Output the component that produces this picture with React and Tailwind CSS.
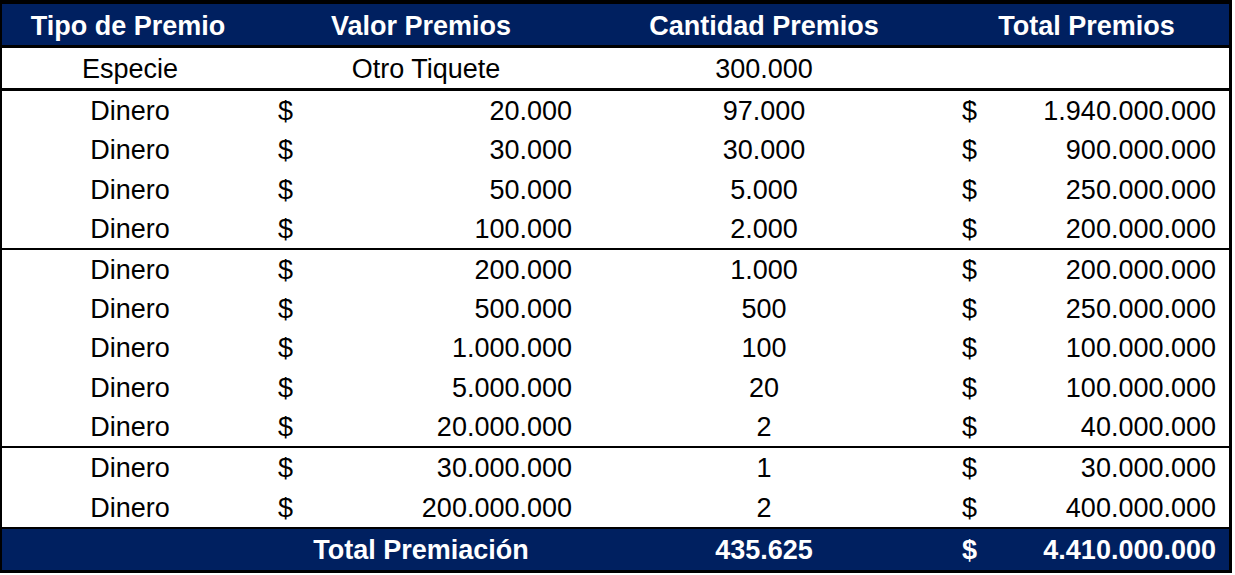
import React from 'react';

const font = { fontFamily: '"Liberation Sans", Arial, sans-serif' };

const groups = [
  [
    ['20.000', '97.000', '1.940.000.000'],
    ['30.000', '30.000', '900.000.000'],
    ['50.000', '5.000', '250.000.000'],
    ['100.000', '2.000', '200.000.000'],
  ],
  [
    ['200.000', '1.000', '200.000.000'],
    ['500.000', '500', '250.000.000'],
    ['1.000.000', '100', '100.000.000'],
    ['5.000.000', '20', '100.000.000'],
    ['20.000.000', '2', '40.000.000'],
  ],
  [
    ['30.000.000', '1', '30.000.000'],
    ['200.000.000', '2', '400.000.000'],
  ],
];

const cols = 'grid grid-cols-[256px_326px_360px_285px]';

function PrizeRow({ valor, cantidad, total, height }) {
  return (
    <div className={`${cols} items-center ${height} pt-[2px] text-[27px] text-black`}>
      <div className="text-center">Dinero</div>
      <div className="flex justify-between pl-[20px] pr-[12px]">
        <span>$</span>
        <span>{valor}</span>
      </div>
      <div className="text-center">{cantidad}</div>
      <div className="flex justify-between pl-[18px] pr-[13px]">
        <span>$</span>
        <span>{total}</span>
      </div>
    </div>
  );
}

export default function App() {
  // Zeilenhöhen je Gruppe (wie im Sheet leicht unterschiedlich)
  const heights = ['h-[39.25px]', 'h-[39.2px]', 'h-[39.5px]'];

  return (
    <div className="bg-white w-[1235px] h-[575px]" style={font}>
      <div className="w-[1232px] border-black border-t-[4px] border-l-[2px] border-r-[3px] border-b-[3px] leading-none">
        {/* Kopfzeile */}
        <div className={`${cols} items-center h-[44px] pt-[3px] bg-[#002060] text-white font-bold text-[27px] border-b-[3px] border-black`}>
          <div className="text-center pr-[4px]">Tipo de Premio</div>
          <div className="text-center">Valor Premios</div>
          <div className="text-center">Cantidad Premios</div>
          <div className="text-center">Total Premios</div>
        </div>

        <div className={`${cols} items-center h-[43px] pt-[3px] text-[27px] text-black border-b-[3px] border-black`}>
          <div className="text-center">Especie</div>
          <div className="text-center pl-[10px]">Otro Tiquete</div>
          <div className="text-center">300.000</div>
          <div />
        </div>

        {groups.map((g, gi) => (
          <div key={gi} className="border-b-2 border-black">
            {g.map((r, i) => (
              <PrizeRow key={i} valor={r[0]} cantidad={r[1]} total={r[2]} height={heights[gi]} />
            ))}
          </div>
        ))}

        <div className={`${cols} items-center h-[41px] pt-[2px] bg-[#002060] text-white font-bold text-[27px]`}>
          <div />
          <div className="text-center">Total Premiación</div>
          <div className="text-center">435.625</div>
          <div className="flex justify-between pl-[18px] pr-[13px]">
            <span>$</span>
            <span>4.410.000.000</span>
          </div>
        </div>
      </div>
    </div>
  );
}
